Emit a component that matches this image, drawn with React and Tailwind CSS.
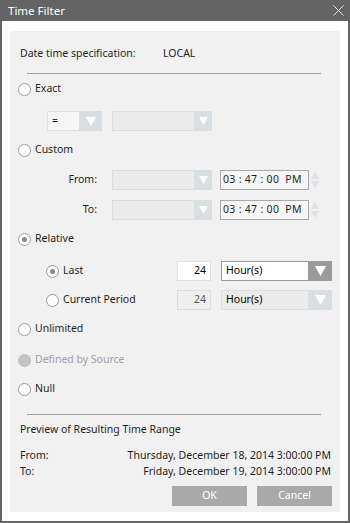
import React from "react";

function Radio({ checked, disabled }) {
  if (disabled) {
    return <span className="block w-[13px] h-[13px] rounded-full bg-[#c4c4c4] border border-[#bdbdbd] shrink-0" />;
  }
  return (
    <span className="flex items-center justify-center w-[13px] h-[13px] rounded-full bg-white border border-[#9a9a9a] shrink-0">
      {checked && <span className="block w-[5px] h-[5px] rounded-full bg-[#8a8a8a]" />}
    </span>
  );
}

function Tri({ color = "white", w = 10, h = 9 }) {
  return (
    <svg width={w} height={h} viewBox="0 0 10 9">
      <path d="M0 0 L10 0 L5 9 Z" fill={color} />
    </svg>
  );
}

function RadioRow({ label, checked, disabled, className = "" }) {
  return (
    <div className={"flex items-center h-[18px] gap-[4px] " + className}>
      <Radio checked={checked} disabled={disabled} />
      <span className={disabled ? "text-[#a0a0a0]" : ""}>{label}</span>
    </div>
  );
}

function DisabledSelect({ className = "" }) {
  return (
    <div className={"flex h-[20px] w-[100px] bg-[#d8dfe2] " + className}>
      <div className="flex-1 m-[1px] mr-0 bg-[#ececec]" />
      <div className="w-[18px] flex items-center justify-center">
        <Tri w={9} h={8} />
      </div>
    </div>
  );
}

function TimeBox() {
  return (
    <div className="flex items-center">
      <div className="w-[89px] h-[20px] border border-[#a9a9a9] bg-[#f6f6f6] flex items-center pl-[2px] whitespace-pre text-[#1e1e1e] tracking-[0.3px]">
        03 : 47 : 00  PM
      </div>
      <svg width="10" height="20" viewBox="0 0 10 20" className="ml-[1px]">
        <path d="M1 9 L5 2 L9 9 Z" fill="#dce2e5" />
        <path d="M1 11 L5 18 L9 11 Z" fill="#dce2e5" />
      </svg>
    </div>
  );
}

export default function App() {
  return (
    <div
      className="w-[350px] h-[523px] bg-[#646464] flex flex-col text-[10.5px] text-[#1e1e1e]"
      style={{ fontFamily: '"Noto Sans", "Open Sans", sans-serif' }}
    >
      <div className="h-[21px] flex items-center justify-between pl-[8px] pr-[6px] text-white shrink-0">
        <span className="text-[11.5px]">Time Filter</span>
        <svg width="11" height="11" viewBox="0 0 11 11">
          <path d="M0.5 0.5 L10.5 10.5 M10.5 0.5 L0.5 10.5" stroke="#e6e6e6" strokeWidth="1" />
        </svg>
      </div>
      <div className="flex-1 mx-[2px] mb-[2px] bg-white pt-[10px] pb-[9px] px-[8px] flex flex-col">
        <div className="flex-1 bg-[#f1f1f1] flex flex-col pl-[8px] pr-[8px] pt-[14px]">
          <div className="flex items-center h-[18px] pl-[2px]">
            <span className="w-[143px]">Date time specification:</span>
            <span>LOCAL</span>
          </div>
          <div className="mt-[10px] ml-[9px] w-[294px] h-[1px] bg-[#a0a0a0]" />

          <RadioRow label="Exact" className="mt-[6px]" />
          <div className="flex mt-[13px] ml-[29px] gap-[10px]">
            <div className="flex h-[20px] w-[55px] bg-[#d8dfe2]">
              <div className="w-[31px] m-[1px] mr-0 bg-[#f6f6f6] flex items-center pl-[4px] text-black">=</div>
              <div className="flex-1 flex items-center justify-center">
                <Tri />
              </div>
            </div>
            <DisabledSelect />
          </div>

          <RadioRow label="Custom" className="mt-[10px]" />
          <div className="flex items-center mt-[11px]">
            <span className="w-[79px] text-right">From:</span>
            <DisabledSelect className="ml-[15px]" />
            <div className="ml-[8px]">
              <TimeBox />
            </div>
          </div>
          <div className="flex items-center mt-[10px]">
            <span className="w-[79px] text-right">To:</span>
            <DisabledSelect className="ml-[15px]" />
            <div className="ml-[8px]">
              <TimeBox />
            </div>
          </div>

          <RadioRow label="Relative" checked className="mt-[10px]" />
          <div className="flex items-center mt-[13px] h-[20px]">
            <div className="ml-[28px] w-[131px]">
              <RadioRow label="Last" checked />
            </div>
            <div className="w-[34px] h-[20px] bg-white border border-[#e0e0e0] flex items-center justify-end pr-[4px] text-black">24</div>
            <div className="ml-[10px] flex h-[20px] w-[111px] bg-[#9b9b9b]">
              <div className="flex-1 m-[1px] mr-0 bg-white flex items-center pl-[4px] text-black">Hour(s)</div>
              <div className="w-[24px] flex items-center justify-center">
                <Tri w={11} h={10} />
              </div>
            </div>
          </div>
          <div className="flex items-center mt-[9px] h-[20px]">
            <div className="ml-[28px] w-[131px]">
              <RadioRow label="Current Period" />
            </div>
            <div className="w-[34px] h-[20px] bg-[#efefef] border border-[#dcdcdc] flex items-center justify-end pr-[4px] text-[#555]">24</div>
            <div className="ml-[10px] flex h-[20px] w-[111px] bg-[#d8dfe2]">
              <div className="flex-1 m-[1px] mr-0 bg-[#ececec] flex items-center pl-[4px] text-black">Hour(s)</div>
              <div className="w-[24px] flex items-center justify-center">
                <Tri w={11} h={10} />
              </div>
            </div>
          </div>

          <RadioRow label="Unlimited" className="mt-[10px]" />
          <RadioRow label="Defined by Source" disabled className="mt-[13px]" />
          <RadioRow label="Null" className="mt-[11px]" />

          <div className="mt-[16px] ml-[9px] w-[294px] h-[1px] bg-[#a0a0a0]" />
          <div className="mt-[6px] h-[18px] flex items-center pl-[2px]">Preview of Resulting Time Range</div>
          <div className="mt-[9px] h-[16px] flex items-center justify-between pl-[2px] pr-[1px]">
            <span>From:</span>
            <span>Thursday, December 18, 2014 3:00:00 PM</span>
          </div>
          <div className="h-[16px] flex items-center justify-between pl-[2px] pr-[1px]">
            <span>To:</span>
            <span>Friday, December 19, 2014 3:00:00 PM</span>
          </div>
          <div className="mt-[6px] flex justify-end gap-[10px] pr-[0px]">
            <div className="w-[75px] h-[20px] bg-[#a9a9a9] text-white flex items-center justify-center">OK</div>
            <div className="w-[75px] h-[20px] bg-[#a9a9a9] text-white flex items-center justify-center">Cancel</div>
          </div>
        </div>
      </div>
    </div>
  );
}
